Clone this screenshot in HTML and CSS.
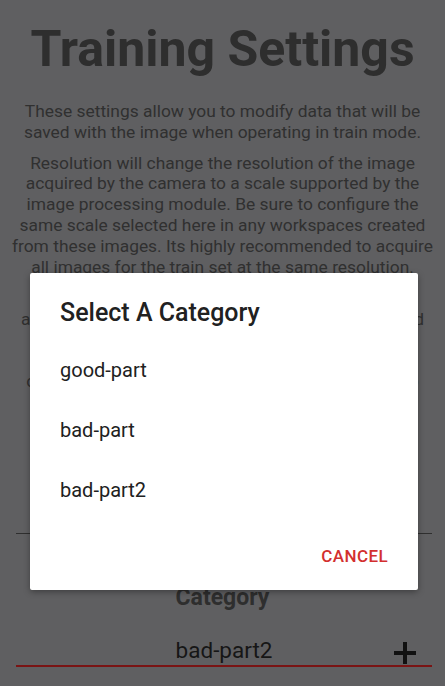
FILE: index.html
```html
<!DOCTYPE html>
<html>
<head>
<meta charset="utf-8">
<link rel="stylesheet" href="styles.css">
</head>
<body>
<main class="page">
  <h1 class="title">Training Settings</h1>
  <p class="text intro">These settings allow you to modify data that will be saved with the image when operating in train mode.</p>
  <p class="text">Resolution will change the resolution of the image acquired by the camera to a scale supported by the image processing module. Be sure to configure the same scale selected here in any workspaces created from these images. Its highly recommended to acquire all images for the train set at the same resolution.</p>
  <p class="text behind one">a category is saved with each image that is acquired</p>
  <p class="text behind two">choose a category from the list or press the plus to</p>
  <div class="spinner"></div>
  <h2 class="section">Category</h2>
  <div class="field">
    <span class="field-value">bad-part2</span>
    <svg class="plus" width="22" height="22" viewBox="0 0 22 22"><path d="M9 0h4v9h9v4h-9v9H9v-9H0V9h9z" fill="#111"/></svg>
  </div>
</main>
<div class="dialog">
  <div class="dialog-title">Select A Category</div>
  <ul class="options">
    <li>good-part</li>
    <li>bad-part</li>
    <li>bad-part2</li>
  </ul>
  <div class="actions"><span class="cancel">CANCEL</span></div>
</div>
</body>
</html>
```
FILE: styles.css
```css
html, body {
  margin: 0;
  padding: 0;
  background: #5f5f61;
  font-family: Roboto, "Noto Sans", sans-serif;
}
.page {
  display: flex;
  flex-direction: column;
  align-items: stretch;
  padding: 0 8px;
  height: 686px;
  overflow: hidden;
}
.title {
  margin: 18px 0 0;
  font-size: 50px;
  line-height: 62px;
  font-weight: 700;
  color: #2e2e2e;
  text-align: center;
}
.text {
  margin: 0;
  font-size: 17.4px;
  line-height: 20.8px;
  color: #303030;
  text-align: center;
}
.intro {
  margin-top: 21px;
  margin-bottom: 10px;
}
.behind.one { margin-top: 32px; }
.behind.two { margin-top: 41px; }
.spinner {
  margin: 141px 5px 0 8px;
  height: 1px;
  background: #2f2f2f;
}
.section {
  margin: 50px 0 0;
  font-size: 23px;
  line-height: 28px;
  font-weight: 700;
  color: #2e2e2e;
  text-align: center;
}
.field {
  position: relative;
  margin: 22px 5px 0 8px;
  height: 31px;
  border-bottom: 2px solid #7a1414;
  display: flex;
  justify-content: center;
  align-items: flex-end;
}
.field-value {
  font-size: 22.5px;
  line-height: 30px;
  color: #161616;
}
.plus {
  position: absolute;
  right: 16px;
  bottom: 1px;
}
.dialog {
  position: absolute;
  left: 30px;
  top: 273px;
  width: 388px;
  height: 317px;
  background: #fff;
  border-radius: 2px;
  box-shadow: 0 2px 6px rgba(0,0,0,0.35);
  display: flex;
  flex-direction: column;
  box-sizing: border-box;
  padding: 25px 30px 0 30px;
}
.dialog-title {
  font-size: 25px;
  line-height: 30px;
  font-weight: 500;
  color: #212121;
}
.options {
  list-style: none;
  margin: 12px 0 0;
  padding: 0;
}
.options li {
  height: 60px;
  line-height: 60px;
  font-size: 20px;
  color: #212121;
}
.actions {
  display: flex;
  justify-content: flex-end;
  margin-top: 26px;
}
.cancel {
  font-size: 17px;
  font-weight: 500;
  color: #d32f2f;
  letter-spacing: 0.4px;
}
```
